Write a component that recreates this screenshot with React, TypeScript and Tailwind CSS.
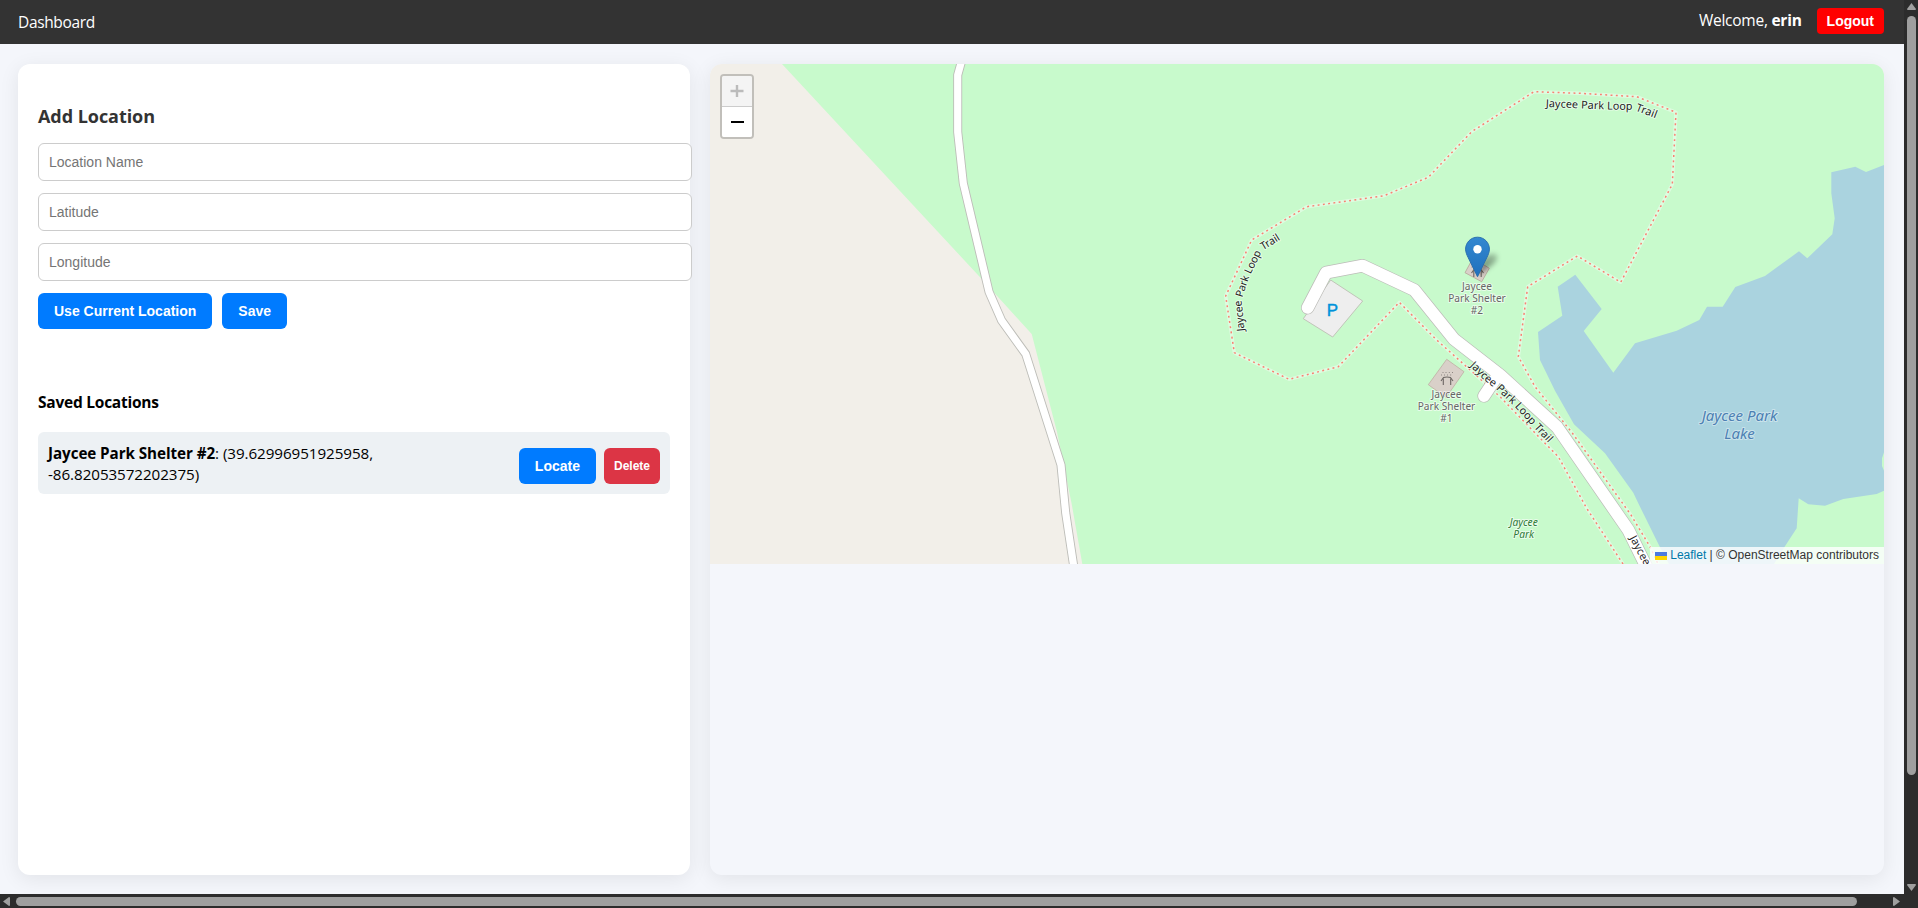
import React from 'react';

const uiFont = "font-['Open_Sans','Noto_Sans',sans-serif]";
const arial = "font-['Liberation_Sans',Arial,sans-serif]";

const trail =
  'M1623,564 L1586.7,508.3 L1558.3,456.7 L1546.7,445 L1500,396.7 L1436.7,340 L1399.3,302.3 L1338.3,366.7 L1289,379.3 L1234.3,352.7 L1225.7,296 L1251.7,240 L1306.7,206.7 L1384,195.7 L1428.3,177.3 L1471.7,131.7 L1534,91.7 L1580,93.3 L1636.7,96.7 L1676,112.3 L1672.3,184.3 L1620.7,282.3 L1577.3,256 L1527.7,286.7 L1518.3,356.7 L1535,386.7 L1572.5,433.3 L1631,515 L1650,546.7 L1659,566';

const westRoad =
  'M963,56 L957.7,75 L957.7,132 L963.3,183.3 L989,291.7 L1001.7,320.7 L1025.7,354 L1061,465 L1065.7,513 L1074.3,570';

const mainRoad =
  'M1307.7,307.7 L1326,272.7 L1362.7,265.7 L1414.3,290 L1454,339.3 L1500,375 L1557.3,427.3 L1628.3,530 L1649,572';

const spur = 'M1484,396 L1498,375';

const lake =
  'M1575.3,274.7 L1601.7,309 L1583.7,331 L1613.3,372.7 L1635,343.3 L1676.7,330.7 L1699.3,320 L1707,306.7 L1722.7,306.7 L1735.3,287 L1765,276 L1799,251.3 L1807.3,258.3 L1832.3,234.3 L1834.7,218.3 L1831.3,193.3 L1831.3,172.3 L1855.3,166.7 L1866,172 L1884,165 L1884,452.3 L1882,458.3 L1882,466 L1884,470.7 L1884,490.7 L1876.7,494 L1843.3,499 L1825,505.7 L1808.3,504.3 L1798.7,498.3 L1796.7,528.3 L1784.3,547.3 L1774,564 L1669,564 L1660,547.3 L1638.3,503.3 L1633.3,492.7 L1605,453.3 L1574,424.3 L1555,390.7 L1540,360 L1538,332 L1562.3,315.7 L1557.7,286.7 Z';

type LabelProps = { x: number; y: number; lines: string[]; size: number; gap: number; color: string; italic?: boolean; halo?: string };

function MapLabel({ x, y, lines, size, gap, color, italic, halo = 'rgba(255,255,255,0.6)' }: LabelProps) {
  return (
    <g
      textAnchor="middle"
      fontSize={size}
      fill={color}
      stroke={halo}
      strokeWidth={2}
      strokeLinejoin="round"
      paintOrder="stroke"
      fontStyle={italic ? 'italic' : 'normal'}
    >
      {lines.map((line, i) => (
        <text key={line} x={x} y={y + i * gap}>
          {line}
        </text>
      ))}
    </g>
  );
}

function ShelterIcon({ x, y }: { x: number; y: number }) {
  return (
    <g transform={`translate(${x} ${y})`} stroke="#6b6663" fill="none" strokeWidth="1.1">
      <path d="M-6 3 L-3.6 -0.4 Q0 -1.6 3.6 -0.4 L6 3" />
      <path d="M-3.7 0.5 V7 M3.7 0.5 V7" />
      <path strokeWidth="0.9" strokeOpacity="0.75" d="M-4.5 -5.5 h1 M-1.5 -5.5 h1 M1.8 -5.5 h1 M5 -5.5 h1 M-6 -3 h1 M-3 -3 h1 M0 -3 h1 M3.2 -3 h1" />
    </g>
  );
}

function MapCanvas() {
  return (
    <svg
      className="block h-[500px] w-full font-['Noto_Sans','Open_Sans',sans-serif]"
      viewBox="710 64 1174 500"
      preserveAspectRatio="xMinYMin slice"
    >
      <defs>
        <linearGradient id="pin" x1="0" y1="0" x2="0" y2="1">
          <stop offset="0" stopColor="#3388d0" />
          <stop offset="1" stopColor="#1f70bd" />
        </linearGradient>
        <linearGradient id="shade" x1="0" y1="1" x2="1" y2="0">
          <stop offset="0" stopColor="#000" stopOpacity="0.5" />
          <stop offset="1" stopColor="#000" stopOpacity="0.2" />
        </linearGradient>
        <filter id="soft" x="-60%" y="-60%" width="220%" height="220%">
          <feGaussianBlur stdDeviation="2.6" />
        </filter>
        <path id="label-top" d="M1545.7,107 L1600,109.3 L1634,110 L1664,121.5" />
        <path id="label-west" d="M1244.5,331 L1241.5,300 L1248.8,278 L1261,253 Q1263,250 1266,248.5 L1288,235" />
        <path id="label-road" d="M1469.5,366 L1484,380 L1497,390 L1516,408 L1536,430 L1552,447" />
        <path id="label-south" d="M1629.5,538 L1652,580" />
      </defs>

      <rect x="710" y="64" width="1174" height="500" fill="#f2efe9" />
      <path d="M782,64 L981.7,279 L1031.7,334 L1057,432 L1071.7,504 L1082.3,564 L1884,564 L1884,64 Z" fill="#c8facc" />
      <path d={lake} fill="#aad3df" />
      <path d="M1330.7,280 L1362.7,301 L1332.7,337 L1303.3,318.7 Z" fill="#eeeeee" stroke="#b9b9ae" strokeWidth="0.8" />
      <path d="M1446.7,359.3 L1464,371.7 L1446,397.5 L1428.3,384.7 Z" fill="#d9d0c9" stroke="#bfafa3" strokeWidth="0.8" />
      <path d="M1473,258 L1489.3,268.3 L1481.7,281.7 L1465,272.7 Z" fill="#d9d0c9" stroke="#b5a598" strokeWidth="0.8" />

      <g fill="none" strokeLinejoin="round">
        <path d={trail} stroke="#ffffff" strokeOpacity="0.4" strokeWidth="3.4" />
        <path d={trail} stroke="#fa8072" strokeWidth="1.5" strokeDasharray="1.9 3.4" />
        <path d={westRoad} stroke="#bdbdb8" strokeWidth="9" />
        <path d={mainRoad} stroke="#bcbcb8" strokeWidth="13.4" strokeLinecap="round" />
        <path d={spur} stroke="#bcbcb8" strokeWidth="13.2" strokeLinecap="round" />
        <path d={westRoad} stroke="#ffffff" strokeWidth="7.2" />
        <path d={mainRoad} stroke="#ffffff" strokeWidth="12" strokeLinecap="round" />
        <path d={spur} stroke="#ffffff" strokeWidth="11.8" strokeLinecap="round" />
      </g>

      <ShelterIcon x={1447} y={378} />
      <ShelterIcon x={1477.5} y={270} />

      <text x="1332.3" y="315.8" textAnchor="middle" fontSize="17" fill="#0092da" stroke="#0092da" strokeWidth="0.4" className="font-['Liberation_Sans',sans-serif]">
        P
      </text>

      <g fontSize="10.8" fill="#222" stroke="rgba(255,255,255,0.55)" strokeWidth="2" strokeLinejoin="round" paintOrder="stroke">
        <text textLength="111.5">
          <textPath href="#label-top">Jaycee Park Loop Trail</textPath>
        </text>
        <text textLength="106" fontSize="10.6">
          <textPath href="#label-west">Jaycee Park Loop Trail</textPath>
        </text>
        <text textLength="110.5">
          <textPath href="#label-road">Jaycee Park Loop Trail</textPath>
        </text>
        <text>
          <textPath href="#label-south">Jaycee</textPath>
        </text>
      </g>

      <MapLabel x={1477} y={290} lines={['Jaycee', 'Park Shelter', '#2']} size={10.1} gap={12} color="#666" />
      <MapLabel x={1446.5} y={398} lines={['Jaycee', 'Park Shelter', '#1']} size={10.1} gap={12} color="#666" />
      <MapLabel x={1739.5} y={420.5} lines={['Jaycee Park', 'Lake']} size={15} gap={18.7} color="#4d80b3" italic halo="rgba(255,255,255,0.4)" />
      <MapLabel x={1523.7} y={526} lines={['Jaycee', 'Park']} size={10.2} gap={11.8} color="#2f7a38" italic />

      <g transform="translate(1465 236.7)">
        <path d="M13 39 L17 24 Q21 17 30 17 Q35 20 29 27 Z" fill="url(#shade)" filter="url(#soft)" />
        <path
          d="M12.5 0.5 C5.8 0.5 0.6 5.9 0.6 12.4 C0.6 15.2 1.7 17.9 3 20.5 L12.5 40 L22 20.5 C23.3 17.9 24.4 15.2 24.4 12.4 C24.4 5.9 19.2 0.5 12.5 0.5 Z"
          fill="url(#pin)"
          stroke="#2a6fae"
          strokeWidth="1"
        />
        <circle cx="12.5" cy="12.6" r="4.2" fill="#fff" />
      </g>
    </svg>
  );
}

function ZoomControl() {
  return (
    <div className="absolute top-[10px] left-[10px] flex w-[34px] flex-col overflow-hidden rounded border-2 border-black/20 bg-clip-padding">
      <button aria-label="Zoom in" className="flex h-[31px] items-center justify-center border-b border-[#cccccc] bg-[#f4f4f4]">
        <svg width="14" height="14" viewBox="0 0 14 14" stroke="#bbbbbb" strokeWidth="2.4">
          <path d="M0.5 7 H13.5 M7 1 V13" />
        </svg>
      </button>
      <button aria-label="Zoom out" className="flex h-[30px] items-center justify-center bg-white">
        <svg width="14" height="14" viewBox="0 0 14 14" stroke="#000" strokeWidth="2">
          <path d="M1 7 H14" />
        </svg>
      </button>
    </div>
  );
}

function Attribution() {
  return (
    <div className={`${arial} absolute right-0 bottom-0 flex h-[17px] items-center bg-white/80 px-[5px] text-[12px] leading-[17px] whitespace-pre text-[#333333]`}>
      <svg className="mr-[3px]" width="12" height="8" viewBox="0 0 12 8">
        <path fill="#4C7BE1" d="M0 0h12v4H0z" />
        <path fill="#FFD500" d="M0 4h12v4H0z" />
      </svg>
      <span className="text-[#0078a8]">Leaflet</span>
      <span> | © OpenStreetMap contributors</span>
    </div>
  );
}

function Field({ placeholder }: { placeholder: string }) {
  return (
    <input
      className={`${arial} mb-3 block h-[38px] w-[654px] rounded-[6px] border border-[#cccccc] bg-white px-[10px] text-[14px] text-[#333] placeholder:text-[#757575]`}
      placeholder={placeholder}
    />
  );
}

const blueButton = 'h-9 rounded-[6px] bg-[#007bff] px-4 text-[14px] font-bold text-white';

export default function App() {
  return (
    <div className={`${uiFont} flex h-[908px] w-[1918px] flex-col overflow-hidden bg-[#f4f6fb] text-black`}>
      <div className="flex min-h-0 flex-1">
        <div className="flex min-w-0 flex-1 flex-col">
          <header className="flex h-[44px] shrink-0 items-center justify-between bg-[#333333] pr-5 pl-[18px] text-[15.5px] text-white">
            <span className="pt-[1px] tracking-[-0.35px]">Dashboard</span>
            <div className="-mt-[2px] flex items-center">
              <span className="mr-[15px] tracking-[-0.25px]">
                Welcome, <b className="font-bold">erin</b>
              </span>
              <button className={`${arial} h-[26px] rounded-[4px] bg-[#ff0000] px-[10px] text-[14px] font-bold`}>Logout</button>
            </div>
          </header>

          <main className="flex flex-1 gap-5 pt-5 pr-5 pb-[19px] pl-[18px]">
            <section className="w-[672px] shrink-0 rounded-[12px] bg-white p-5 shadow-[0_4px_20px_rgba(0,0,0,0.08)]">
              <h2 className="mt-5 mb-[14px] h-[25px] text-[18px] leading-[25px] font-bold tracking-[-0.05px] text-[#333333]">Add Location</h2>
              <Field placeholder="Location Name" />
              <Field placeholder="Latitude" />
              <Field placeholder="Longitude" />
              <div className={`${arial} flex gap-[10px]`}>
                <button className={blueButton}>Use Current Location</button>
                <button className={blueButton}>Save</button>
              </div>

              <h3 className="mt-[62px] mb-[19px] text-[15.5px] leading-[22px] font-bold tracking-[-0.24px]">Saved Locations</h3>
              <div className="flex h-[62px] items-center justify-between rounded-[6px] bg-[#edf1f4] px-[10px]">
                <p className="w-[400px] pt-[2px] text-[15.2px] leading-[21.3px] tracking-[-0.06px]">
                  <b className="font-bold">Jaycee Park Shelter #2</b>: (39.62996951925958,
                  <br />
                  -86.82053572202375)
                </p>
                <div className={`${arial} mt-[6px] flex gap-2`}>
                  <button className={blueButton}>Locate</button>
                  <button className="h-9 rounded-[6px] bg-[#dc3545] px-[10px] text-[12px] font-bold text-white">Delete</button>
                </div>
              </div>
            </section>

            <section className="min-w-0 flex-1 overflow-hidden rounded-[12px] shadow-[0_4px_20px_rgba(0,0,0,0.08)]">
              <div className="relative h-[500px]">
                <MapCanvas />
                <ZoomControl />
                <Attribution />
              </div>
            </section>
          </main>
        </div>

        <div className="flex w-[14px] shrink-0 flex-col items-center bg-[#2c2c2c] pt-[3px] pb-[3px] pl-[1px]">
          <svg width="9" height="7" viewBox="0 0 9 7" fill="#9f9f9f">
            <path d="M4.5 0 L9 6 Q9 7 8 7 H1 Q0 7 0 6 Z" />
          </svg>
          <div className="mt-[6px] h-[759px] w-[9px] rounded-full bg-[#9f9f9f]" />
          <svg className="mt-auto" width="9" height="7" viewBox="0 0 9 7" fill="#9f9f9f">
            <path d="M4.5 7 L9 1 Q9 0 8 0 H1 Q0 0 0 1 Z" />
          </svg>
        </div>
      </div>

      <div className="flex h-[14px] shrink-0 items-center bg-[#2c2c2c] pr-[18px] pl-[3px]">
        <svg width="7" height="9" viewBox="0 0 7 9" fill="#9f9f9f">
          <path d="M0 4.5 L6 0 Q7 0 7 1 V8 Q7 9 6 9 Z" />
        </svg>
        <div className="ml-[6px] h-[9px] w-[1841px] rounded-full bg-[#9f9f9f]" />
        <svg className="ml-auto" width="7" height="9" viewBox="0 0 7 9" fill="#9f9f9f">
          <path d="M7 4.5 L1 0 Q0 0 0 1 V8 Q0 9 1 9 Z" />
        </svg>
      </div>
    </div>
  );
}
